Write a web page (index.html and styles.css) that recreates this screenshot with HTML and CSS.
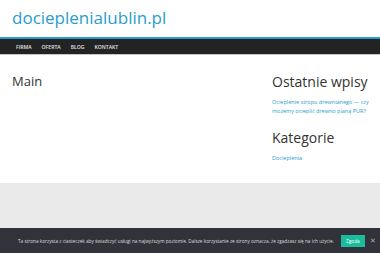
FILE: index.html
```html
<!DOCTYPE html>
<html lang="pl">
<head>
  <meta charset="UTF-8">
  <meta name="viewport" content="width=device-width, initial-scale=1.0">
  <title>docieplenialublin.pl</title>
  <link rel="stylesheet" href="styles.css">
</head>
<body>

  <header class="site-header">
    <div class="site-title">docieplenialublin.pl</div>
  </header>

  <nav class="main-nav">
    <a href="#">FIRMA</a>
    <a href="#">OFERTA</a>
    <a href="#">BLOG</a>
    <a href="#">KONTAKT</a>
  </nav>

  <div class="content">
    <main class="primary">
      <h1>Main</h1>
    </main>

    <aside class="sidebar">
      <h2>Ostatnie wpisy</h2>
      <a class="widget-link" href="#">Ocieplenie stropu drewnianego — czy możemy ocieplić drewno pianą PUR?</a>

      <h2 class="widget-title">Kategorie</h2>
      <a class="widget-link" href="#">Docieplenia</a>
    </aside>
  </div>

  <footer class="site-footer"></footer>

  <!-- Cookie notice -->
  <div class="cookie-bar">
    <span class="cookie-text">Ta strona korzysta z ciasteczek aby świadczyć usługi na najwyższym poziomie. Dalsze korzystanie ze strony oznacza, że zgadzasz się na ich użycie.</span>
    <button class="cookie-accept">Zgoda</button>
    <span class="cookie-close">✕</span>
  </div>

</body>
</html>
```

FILE: styles.css
```css
* {
  margin: 0;
  padding: 0;
  box-sizing: border-box;
}

body {
  font-family: "Open Sans", Arial, sans-serif;
  background-color: #fff;
  width: 380px;
  height: 253px;
  overflow: hidden;
  display: flex;
  flex-direction: column;
}

.site-header {
  height: 37px;
  padding: 7px 0 0 12px;
}

.site-title {
  font-size: 17px;
  line-height: 22px;
  color: #289dcc;
}

.main-nav {
  height: 18px;
  background-color: #232323;
  border-top: 2px solid #289dcc;
  border-bottom: 1px solid #c8c8c8;
  display: flex;
  align-items: center;
  padding-left: 16px;
  gap: 10px;
}

.main-nav a {
  color: #e6e6e6;
  font-size: 5.1px;
  font-weight: 600;
  text-decoration: none;
}

.content {
  display: flex;
  justify-content: space-between;
  height: 128px;
  padding: 17px 0 0 12px;
}

.primary h1 {
  font-size: 13px;
  font-weight: 400;
  color: #333;
  line-height: 18px;
}

.sidebar {
  width: 108px;
  padding-top: 1px;
}

.sidebar h2 {
  font-size: 14px;
  font-weight: 400;
  color: #333;
  line-height: 18px;
  margin-bottom: 7px;
}

.sidebar .widget-title {
  margin-top: 13px;
  margin-bottom: 7px;
}

.widget-link {
  display: block;
  font-size: 5.5px;
  line-height: 9px;
  color: #289dcc;
  text-decoration: none;
}

.site-footer {
  height: 45px;
  background-color: #eaeaea;
}

.cookie-bar {
  flex: 1;
  background-color: #32323a;
  display: flex;
  align-items: center;
  padding-left: 18px;
}

.cookie-text {
  color: #ddd;
  font-size: 4.7px;
  white-space: nowrap;
}

.cookie-accept {
  background-color: #1abc9c;
  color: #fff;
  border: none;
  font-family: inherit;
  font-size: 4.8px;
  padding: 3px 5px;
  height: 12px;
  margin-left: 7px;
}

.cookie-close {
  color: #aaa;
  font-size: 7px;
  margin-left: 5px;
}
```
